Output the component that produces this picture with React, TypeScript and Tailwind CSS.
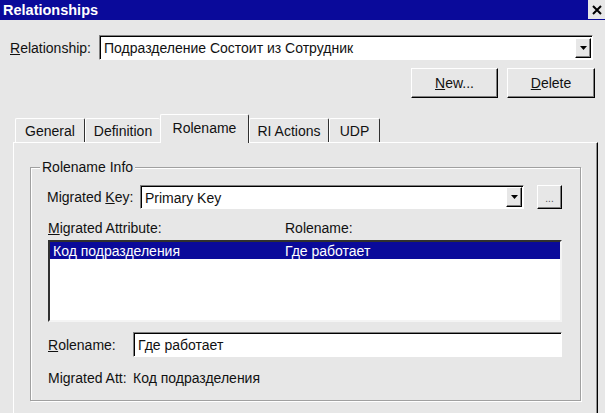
import type { ReactNode } from 'react';

const BG = 'bg-[#e7e7e7]';

function Btn({ className, children }: { className: string; children: ReactNode }) {
  return (
    <div
      className={`flex items-center justify-center ${BG} border border-t-white border-l-white border-r-black border-b-black shadow-[inset_-1px_-1px_0_#808080] ${className}`}
    >
      {children}
    </div>
  );
}

function Arrow() {
  return (
    <svg width="7" height="4" viewBox="0 0 7 4">
      <path d="M0 0h7L3.5 4z" fill="#000" />
    </svg>
  );
}

function Combo({ text, className }: { text: string; className: string }) {
  return (
    <div
      className={`flex items-center bg-white border border-t-[#808080] border-l-[#808080] border-r-white border-b-white shadow-[inset_1px_1px_0_#000] ${className}`}
    >
      <span className="flex-1 pl-[4px] pt-[1px] truncate">{text}</span>
      <Btn className="mr-[1px] w-[16px] h-[20px]">
        <Arrow />
      </Btn>
    </div>
  );
}

const TABS = [
  { label: 'General', w: 'w-[70px]', active: false, edge: true },
  { label: 'Definition', w: 'w-[75px]', active: false, edge: false },
  { label: 'Rolename', w: 'w-[89px]', active: true, edge: true },
  { label: 'RI Actions', w: 'w-[80px]', active: false, edge: true },
  { label: 'UDP', w: 'w-[51px]', active: false, edge: true },
];

export default function App() {
  return (
    <div
      className={`w-[605px] h-[413px] overflow-hidden ${BG} font-['Liberation_Sans',Arial,sans-serif] text-[14px] leading-[16px] text-[#111]`}
    >
      {/* Title bar */}
      <div className="h-[20px] bg-[#0a0a9a] flex items-start justify-between">
        <span className="pl-[3px] pt-[2px] text-[14.5px] font-bold text-white">Relationships</span>
        <div className={`w-[17px] h-[19px] ${BG} flex items-center justify-center`}>
          <svg width="10" height="10" viewBox="0 0 10 10">
            <path d="M1 1L9 9M9 1L1 9" stroke="#000" strokeWidth="2" />
          </svg>
        </div>
      </div>

      {/* Relationship selector */}
      <div className="flex items-center pl-[10px] pr-[12px] mt-[15px]">
        <span className="w-[89px]">
          <u>R</u>elationship:
        </span>
        <Combo className="flex-1 h-[25px]" text="Подразделение Состоит из Сотрудник" />
      </div>

      {/* Buttons */}
      <div className="flex justify-end gap-[9px] pr-[10px] mt-[8px]">
        <Btn className="w-[87px] h-[30px]">
          <span>
            <u>N</u>ew...
          </span>
        </Btn>
        <Btn className="w-[88px] h-[30px]">
          <span>
            <u>D</u>elete
          </span>
        </Btn>
      </div>

      {/* Tabs */}
      <div className="flex items-end h-[28px] pl-[15px] mt-[16px]">
        {TABS.map((t) => (
          <div
            key={t.label}
            className={`flex items-center justify-center ${t.w} ${BG} border-t border-l border-t-white border-l-white rounded-t-[2px] ${
              t.edge ? 'border-r border-r-[#303030]' : ''
            } ${t.active ? 'h-[29px] -mb-[1px] relative pb-[2px]' : 'h-[24px]'}`}
          >
            {t.label}
          </div>
        ))}
      </div>

      {/* Tab panel */}
      <div className="ml-[13px] mr-[7px] h-[300px] border-t border-l border-t-white border-l-white border-r border-r-black shadow-[inset_-1px_0_0_#909090]">
        {/* Group box */}
        <div className="mt-[24px] mx-[16px] h-[234px] border border-[#a0a0a0] shadow-[inset_1px_1px_0_#fff,1px_1px_0_#fff]">
          <div className={`-mt-[9px] ml-[9px] w-fit px-[2px] ${BG}`}>Rolename Info</div>

          <div className="flex items-center pl-[16px] mt-[10px]">
            <span className="w-[93px]">
              Migrated <u>K</u>ey:
            </span>
            <Combo className="w-[384px] h-[24px]" text="Primary Key" />
            <Btn className="ml-[13px] w-[25px] h-[24px]">
              <span className="text-[10px] leading-[10px] text-[#555] pt-[3px]">...</span>
            </Btn>
          </div>

          <div className="flex pl-[17px] mt-[11px] h-[16px]">
            <span className="w-[237px]">
              <u>M</u>igrated Attribute:
            </span>
            <span>Rolename:</span>
          </div>

          <div className="mt-[4px] ml-[17px] w-[514px] h-[82px] bg-white border-2 border-t-[#303030] border-l-[#303030] border-r-[#f4f4f4] border-b-[#f4f4f4]">
            <div className="flex items-center h-[17px] bg-[#0a0a9a] text-white">
              <span className="w-[235px] pl-[3px]">Код подразделения</span>
              <span>Где работает</span>
            </div>
          </div>

          <div className="flex items-center pl-[17px] mt-[10px]">
            <span className="w-[85px]">
              <u>R</u>olename:
            </span>
            <div className="w-[429px] h-[25px] flex items-center bg-white border border-t-[#808080] border-l-[#808080] border-r-white border-b-white shadow-[inset_1px_1px_0_#000] pl-[4px]">
              Где работает
            </div>
          </div>

          <div className="flex items-center pl-[17px] mt-[13px] h-[16px]">
            <span className="w-[85px]">Migrated Att:</span>
            <span>Код подразделения</span>
          </div>
        </div>
      </div>
    </div>
  );
}
